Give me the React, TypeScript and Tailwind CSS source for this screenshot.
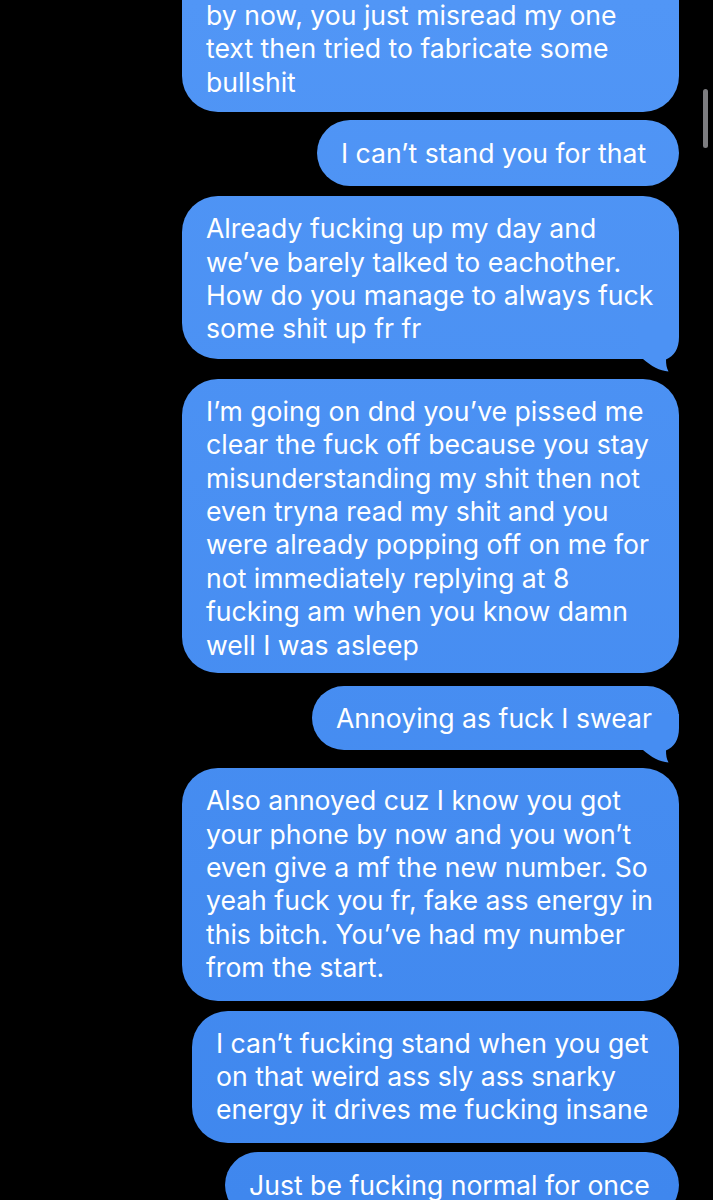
import React from 'react';

type Msg = {
  lines: string[];
  width: number;
  mt: number;
  tail?: string;
  pt?: number;
  pb?: number;
  py?: number;
};

const messages: Msg[] = [
  {
    lines: ['by now, you just misread my one', 'text then tried to fabricate some', 'bullshit'],
    width: 497,
    mt: -47,
    pt: 46,
  },
  { lines: ['I can’t stand you for that'], width: 362, mt: 8, py: 16 },
  {
    lines: [
      'Already fucking up my day and',
      'we’ve barely talked to eachother.',
      'How do you manage to always fuck',
      'some shit up fr fr',
    ],
    width: 497,
    mt: 10,
    pb: 13,
    tail: '#4c92f4',
  },
  {
    lines: [
      'I’m going on dnd you’ve pissed me',
      'clear the fuck off because you stay',
      'misunderstanding my shit then not',
      'even tryna read my shit and you',
      'were already popping off on me for',
      'not immediately replying at 8',
      'fucking am when you know damn',
      'well I was asleep',
    ],
    width: 497,
    mt: 20,
    pb: 11,
  },
  { lines: ['Annoying as fuck I swear'], width: 367, mt: 13, py: 15, tail: '#468df2' },
  {
    lines: [
      'Also annoyed cuz I know you got',
      'your phone by now and you won’t',
      'even give a mf the new number. So',
      'yeah fuck you fr, fake ass energy in',
      'this bitch. You’ve had my number',
      'from the start.',
    ],
    width: 497,
    mt: 18,
    pb: 16,
  },
  {
    lines: [
      'I can’t fucking stand when you get',
      'on that weird ass sly ass snarky',
      'energy it drives me fucking insane',
    ],
    width: 487,
    mt: 10,
    pb: 16,
  },
  { lines: ['Just be fucking normal for once'], width: 454, mt: 9, py: 16 },
];

const Tail = ({ color }: { color: string }) => (
  <svg
    className="absolute right-[-2px] bottom-[-14px]"
    width="42"
    height="50"
    viewBox="0 0 42 50"
  >
    <path
      d="M40 0 L40 14 C40 26 35 33 27 36.5 C27 41 27.5 45 29.5 48.5 C21 48 12 43 4 36 L0 36 L0 0 Z"
      fill={color}
    />
  </svg>
);

const Bubble = ({ m }: { m: Msg }) => {
  const single = m.lines.length === 1;
  const pt = single ? m.py ?? 15 : m.pt ?? 16;
  const pb = single ? m.py ?? 15 : m.pb ?? 13;
  return (
    <div
      className={`relative bg-fixed bg-linear-to-b from-[#5196f6] to-[#3f87ee] text-white pl-[24px] ${
        single ? 'rounded-full leading-[34px]' : 'rounded-[36px] leading-[33.4px]'
      }`}
      style={{ width: m.width, marginTop: m.mt, paddingTop: pt, paddingBottom: pb }}
    >
      {m.tail && <Tail color={m.tail} />}
      <div className="relative">
        {m.lines.map((l, i) => (
          <div key={i} className="whitespace-nowrap">
            {l}
          </div>
        ))}
      </div>
    </div>
  );
};

export default function App() {
  return (
    <div
      className="relative h-[1200px] w-full overflow-hidden bg-black text-[26.6px]"
      style={{ fontFamily: 'Inter, "Noto Sans", sans-serif' }}
    >
      <div className="flex flex-col items-end pr-[34px]">
        {messages.map((m, i) => (
          <Bubble key={i} m={m} />
        ))}
      </div>

      {/* scroll indicator */}
      <div className="absolute right-[5px] top-[89px] h-[59px] w-[5px] rounded-full bg-[#7d7d80]" />
    </div>
  );
}
